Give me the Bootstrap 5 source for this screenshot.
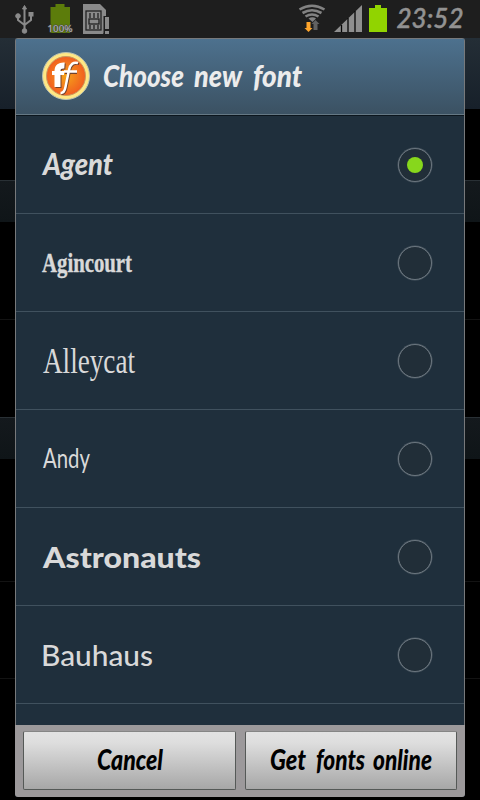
<!DOCTYPE html>
<html lang="en">
<head>
<meta charset="utf-8">
<meta name="viewport" content="width=device-width, initial-scale=1">
<title>Choose new font</title>
<link href="https://cdn.jsdelivr.net/npm/bootstrap@5.3.0/dist/css/bootstrap.min.css" rel="stylesheet">
<style>
body{background:#000;width:480px;height:800px;overflow:hidden;font-family:"Lato",sans-serif}
svg{display:block;overflow:visible;flex:none}
.status{height:38px;background:#1e1e1e}
.backdrop{height:762px;background:
 linear-gradient(#242e36,#17202a) 0 0/100% 71px no-repeat,
 linear-gradient(#293035,#293035) 0 142px/100% 1px no-repeat,
 linear-gradient(#14191d,#0f1518) 0 142px/100% 42px no-repeat,
 linear-gradient(#131313,#131313) 0 281px/100% 1px no-repeat,
 linear-gradient(#293035,#293035) 0 379px/100% 1px no-repeat,
 linear-gradient(#14191d,#0f1518) 0 379px/100% 42px no-repeat,
 linear-gradient(#131313,#131313) 0 543px/100% 1px no-repeat,
 linear-gradient(#131313,#131313) 0 640px/100% 1px no-repeat,#000}
.dialog{width:450px;height:759px;border-radius:3px;background:#1f2f3c;overflow:hidden}
.dialog-main{height:687px;border:1px solid #77797b;border-bottom:0;overflow:hidden}
.dialog-title{height:77px;background:linear-gradient(#4d718e,#3b5162);border-bottom:1px solid #0c161e;box-shadow:inset 0 -1px #657884;padding:0 0 2px 26px}
.font-row{height:98px;border-bottom:1px solid #40515e;padding:1px 32px 0 27px}
.radio{width:34px;height:34px;border:1.500px solid #6b767f;box-shadow:0 0 0 .5px #4c5963;border-radius:50%;background:#212e38}
.radio-dot{width:16px;height:16px;border-radius:50%;background:#87d71c}
.actions{height:72px;background:#9c999b;padding:6px 8px 7px;gap:9px}
.action-btn{border:1px solid #555957;border-top-color:#858585;border-radius:2px;background:linear-gradient(#e2e2e2,#dedede 18%,#a7a7a7);padding:0}
text{fill:#d9d9d9}
.script{font-family:"Lato",sans-serif;font-weight:900;font-style:italic}
.action-btn text{fill:#000}
.dialog-title text{fill:#ececec}
.blackletter{font-family:"Liberation Serif",serif;font-weight:700;stroke:#d9d9d9;stroke-width:.4}
.tall{font-family:"Liberation Serif",serif}
.hand{font-family:"Lato",sans-serif;font-weight:400}
.comic{font-family:"Lato",sans-serif;font-weight:900}
.round{font-family:"Lato",sans-serif;font-weight:500}
</style>
<script src="https://cdn.jsdelivr.net/npm/bootstrap@5.3.0/dist/js/bootstrap.bundle.min.js"></script>
</head>
<body>
<header class="status">
<svg width="480" height="38" viewBox="0 0 480 38">
 <g fill="#8a8a8a" stroke="#8a8a8a">
  <path d="M24.500 8v22M18 17v3l6.500 5 6.500-5v-5" fill="none" stroke-width="2"/>
  <path d="M24.500 5.500l2 3.500h-4z" stroke-width="1"/><circle cx="18" cy="16" r="2.300"/><rect x="29" y="12.500" width="4" height="3.500"/><circle cx="24.500" cy="31" r="2.300"/>
 </g>
 <path fill="#5c7c0b" d="M50.500 7h5V4h9v3h5.500v26H50.500z"/>
 <text x="47.500" y="32" font-size="9.500" font-weight="500" font-family="Noto Sans,sans-serif" textLength="25" lengthAdjust="spacingAndGlyphs" style="fill:#b0b0b0;stroke:#444;stroke-width:1;paint-order:stroke">100%</text>
 <path fill="#8a8a8a" d="M83 4h17l6 6v21l-3 3H83z"/>
 <rect x="86" y="11" width="15" height="19" fill="none" stroke="#222" stroke-width="1.300"/>
 <path d="M90 13v5m4-5v5m4-5v5M90 25v4m4-4v4m4-4v4" stroke="#222" stroke-width="1.300"/>
 <rect x="89" y="19" width="10" height="5" fill="#8a8a8a" stroke="#222" stroke-width="1.300"/>
 <path fill="#1e1e1e" d="M103.500 16h6v19h-6z"/><path fill="#8a8a8a" d="M105 17h4v12h-4zm0 14h4v3h-4z"/>
 <g fill="none" stroke="#828282" stroke-width="2.600"><path d="M299.500 9.500Q312 2 324.500 9.500M302.500 13Q312 7.500 321.500 13M305.500 16.500Q312 12.500 318.500 16.500"/></g><path fill="#828282" d="M308.500 18.500q4-2.500 7.500 0l-3.500 3.500z"/>
 <path fill="#ffa52b" d="M306.500 22h4v6h2l-4 4-4-4h2z"/><path fill="#626262" d="M315.500 20l4 4h-2v6h-4v-6h-2z"/>
 <path fill="#8f8f8f" d="M334 32L362 5v27z"/>
 <path d="M341.500 25v7m6.500-14v14m7-21v21" stroke="#050505" stroke-width="1.300"/>
 <path fill="#91d400" d="M369 8h6V5h6v3h6v24h-18z"/>
 <text x="396.500" y="28" font-size="27" font-family="Lato,sans-serif" font-style="italic" font-weight="500" textLength="67" lengthAdjust="spacingAndGlyphs" style="fill:#929292;stroke:#929292;stroke-width:.5">23:52</text>
</svg>
</header>
<div class="backdrop d-flex justify-content-center align-items-start">
<main class="dialog d-flex flex-column">
 <div class="dialog-main">
  <div class="dialog-title d-flex align-items-center">
   <svg width="48" height="48" viewBox="0 0 48 48"><defs><radialGradient id="orange"><stop stop-color="#f5a31a"/><stop offset="1" stop-color="#f15e20"/></radialGradient></defs>
    <circle cx="24" cy="24" r="23.500" fill="#ffe784" stroke="#b9c0b0"/><circle cx="24" cy="24" r="19.500" fill="url(#orange)" stroke="#c99a62"/>
    <g fill="none" stroke="#70422d" transform="translate(1 1)"><path d="M15.500 35V19q0-6 7-5.500" stroke-width="6"/><path d="M36 11q-7-2-9 7l-3.500 17q-1 6-5 6M22 20h12" stroke-width="2"/></g>
    <g fill="none" stroke="#fff"><path d="M15.500 35V19q0-6 7-5.500" stroke-width="6"/><path d="M10 21h12" stroke-width="4"/><path d="M36 11q-7-2-9 7l-3.500 17q-1 6-5 6M22 19.500h13" stroke-width="2.500"/></g>
   </svg>
   <svg class="ms-3" width="200" height="48"><g class="script" font-size="31"><text x="-3" y="35" textLength="81" lengthAdjust="spacingAndGlyphs">Choose</text> <text x="88" y="35" textLength="48" lengthAdjust="spacingAndGlyphs">new</text> <text x="147" y="35" textLength="49" lengthAdjust="spacingAndGlyphs">font</text></g></svg>
  </div>
  <div class="font-row d-flex align-items-center justify-content-between"><svg width="160" height="48"><text class="script" x="0" y="34" font-size="31" textLength="70" lengthAdjust="spacingAndGlyphs">Agent</text></svg><div class="radio d-flex align-items-center justify-content-center"><div class="radio-dot"></div></div></div>
  <div class="font-row d-flex align-items-center justify-content-between"><svg width="160" height="48"><text class="blackletter" x="-1" y="33" font-size="28" textLength="90" lengthAdjust="spacingAndGlyphs">Agincourt</text></svg><div class="radio"></div></div>
  <div class="font-row d-flex align-items-center justify-content-between"><svg width="160" height="48"><text class="tall" x="0" y="35.500" font-size="35" textLength="92" lengthAdjust="spacingAndGlyphs">Alleycat</text></svg><div class="radio"></div></div>
  <div class="font-row d-flex align-items-center justify-content-between"><svg width="160" height="48"><text class="hand" x="0" y="33" font-size="27" textLength="47" lengthAdjust="spacingAndGlyphs">Andy</text></svg><div class="radio"></div></div>
  <div class="font-row d-flex align-items-center justify-content-between"><svg width="160" height="48"><text class="comic" x="0" y="35" font-size="28" textLength="158" lengthAdjust="spacingAndGlyphs">Astronauts</text></svg><div class="radio"></div></div>
  <div class="font-row d-flex align-items-center justify-content-between"><svg width="160" height="48"><text class="round" x="-2" y="35" font-size="29" textLength="112" lengthAdjust="spacingAndGlyphs">Bauhaus</text></svg><div class="radio"></div></div>
 </div>
 <div class="actions d-flex">
  <button class="action-btn flex-fill d-flex align-items-center justify-content-center w-50" type="button"><svg width="66" height="40"><text class="script" x="1" y="29" font-size="28" textLength="66" lengthAdjust="spacingAndGlyphs">Cancel</text></svg></button>
  <button class="action-btn flex-fill d-flex align-items-center justify-content-center w-50" type="button"><svg width="161" height="40"><g class="script" font-size="28"><text x="0" y="29" textLength="36" lengthAdjust="spacingAndGlyphs">Get</text> <text x="46" y="29" textLength="49" lengthAdjust="spacingAndGlyphs">fonts</text> <text x="103" y="29" textLength="59" lengthAdjust="spacingAndGlyphs">online</text></g></svg></button>
 </div>
</main>
</div>
</body>
</html>
